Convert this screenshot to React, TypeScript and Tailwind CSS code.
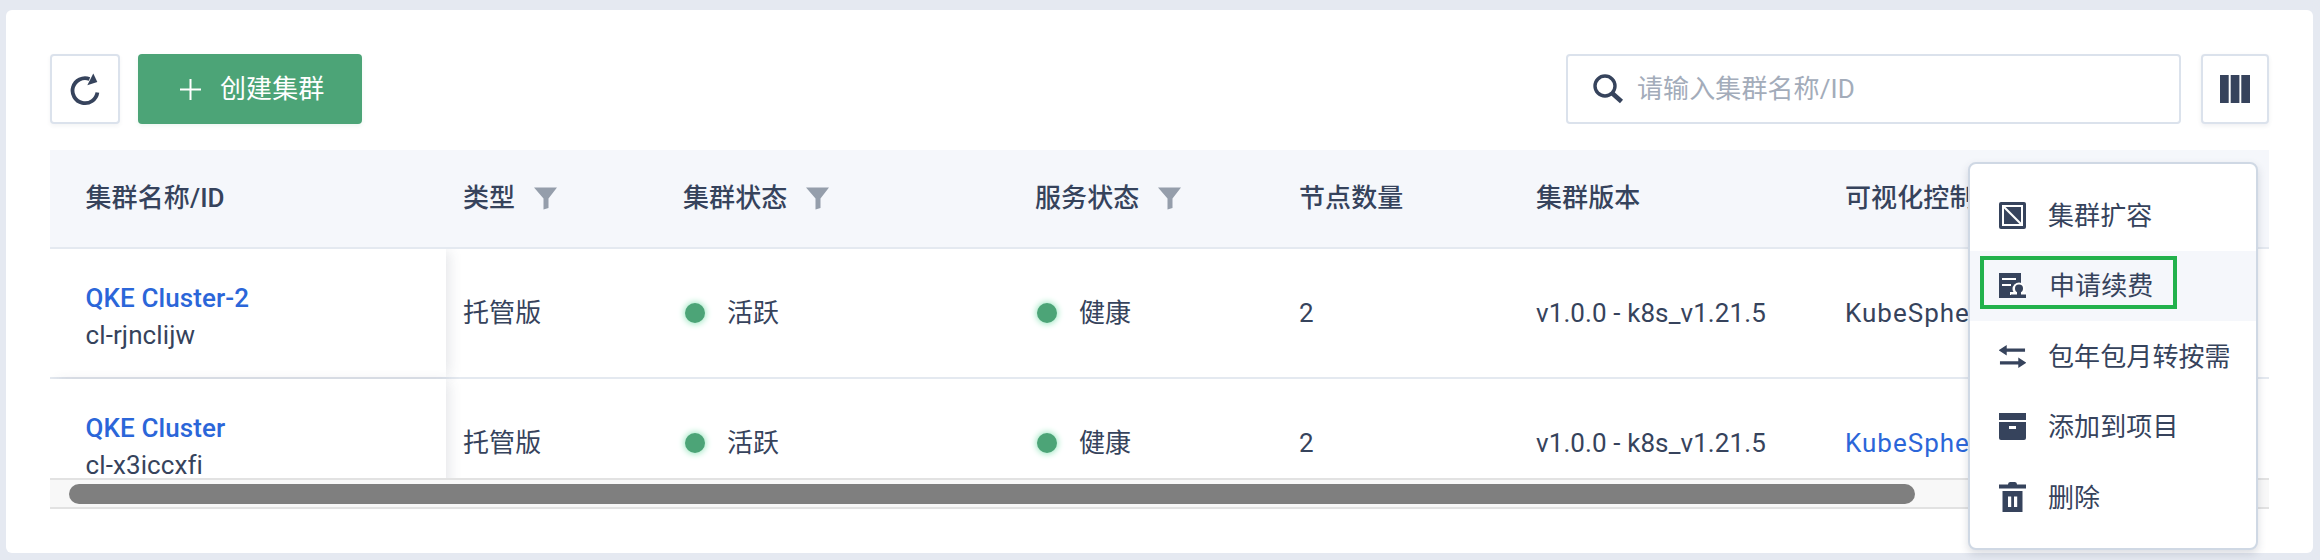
import React from "react";

const columns = [
  { title: "集群名称/ID" },
  { title: "类型", filter: true },
  { title: "集群状态", filter: true },
  { title: "服务状态", filter: true },
  { title: "节点数量" },
  { title: "集群版本" },
  { title: "可视化控制台" },
];

const rows = [
  { name: "QKE Cluster-2", id: "cl-rjnclijw", linked: false },
  { name: "QKE Cluster", id: "cl-x3iccxfi", linked: true },
];

const gridCols = "grid grid-cols-[396px_237px_352px_264px_237px_309px_1fr]";

function FunnelIcon() {
  return (
    <svg width="23" height="23" viewBox="0 0 23 23" className="ml-[19px] shrink-0 fill-[#959eab]">
      <path d="M0 0.5H23L14.5 11.5V21L9.5 22.5V11.5Z" />
    </svg>
  );
}

function StatusDot({ label }: { label: string }) {
  return (
    <div className="flex items-center">
      <span className="ml-[2px] h-5 w-5 rounded-full bg-[#4ca477] shadow-[0_0_6px_1px_#9be6c0]" />
      <span className="ml-[22px]">{label}</span>
    </div>
  );
}

function Toolbar() {
  return (
    <div className="flex h-[70px] items-stretch">
      <button className="flex w-[70px] items-center justify-center rounded-[4px] border-2 border-[#dbe2ec] bg-white shadow-[0_2px_4px_rgba(54,67,92,0.06)]">
        <svg width="30" height="33" viewBox="0 0 30 33" fill="none">
          <path d="M27.4 19.5A12.5 12.5 0 1 1 19.5 6" stroke="#36435c" strokeWidth="3.8" />
          <path d="M23.3 0.6L27.3 9L17.3 12.3Z" fill="#36435c" />
        </svg>
      </button>
      <button className="ml-[18px] flex w-[224px] items-center rounded-[4px] bg-[#4ca477] pl-[42px] text-white shadow-[0_2px_4px_rgba(76,164,119,0.1)]">
        <svg width="21" height="21" viewBox="0 0 21 21" stroke="#fff" strokeWidth="2">
          <path d="M10.5 0V21M0 10.5H21" />
        </svg>
        <span className="ml-[19px]">创建集群</span>
      </button>
      <div className="ml-auto flex w-[615px] items-center rounded-[4px] border-2 border-[#dbe2ec] bg-white pl-[25px]">
        <svg width="31" height="30" viewBox="0 0 31 30" fill="none" stroke="#36435c">
          <circle cx="12" cy="12" r="10" strokeWidth="3.4" />
          <path d="M19.5 19.5L28.5 27.5" strokeWidth="4.6" />
        </svg>
        <span className="ml-[13px] text-[#a3acba]">请输入集群名称/ID</span>
      </div>
      <button className="ml-5 flex w-[68px] items-center justify-center rounded-[4px] border-2 border-[#dbe2ec] bg-white shadow-[0_2px_4px_rgba(54,67,92,0.08)]">
        <svg width="30" height="28" viewBox="0 0 30 28" fill="#36435c">
          <rect x="0" y="0" width="8.7" height="28" />
          <rect x="10.7" y="0" width="8.7" height="28" />
          <rect x="21.3" y="0" width="8.7" height="28" />
        </svg>
      </button>
    </div>
  );
}

function ClusterTable() {
  return (
    <div className="mt-[26px] overflow-hidden">
      <div className={`${gridCols} h-[99px] items-center border-b-2 border-[#e4e9f0] bg-[#f5f7fb] font-medium`}>
        {columns.map((col, i) => (
          <div
            key={col.title}
            className={`flex items-center whitespace-nowrap ${i === 0 ? "pl-[35.5px]" : ""} ${i === 1 ? "pl-[17px]" : ""}`}
          >
            {col.title}
            {col.filter && <FunnelIcon />}
          </div>
        ))}
      </div>
      <div className="h-[229px] overflow-hidden">
        {rows.map((row) => (
          <div key={row.id} className={`${gridCols} h-[130px] items-stretch border-b-2 border-[#e4e9f0]`}>
            <div className="relative z-10 flex flex-col justify-center bg-white pl-[35.5px] pt-2 leading-[37px] shadow-[6px_0_12px_-2px_rgba(54,67,92,0.12)]">
              <span className="font-medium text-[#2b66d9]">{row.name}</span>
              <span>{row.id}</span>
            </div>
            <div className="flex items-center pl-[17px]">托管版</div>
            <div className="flex items-center">
              <StatusDot label="活跃" />
            </div>
            <div className="flex items-center">
              <StatusDot label="健康" />
            </div>
            <div className="flex items-center">2</div>
            <div className="flex items-center whitespace-nowrap">v1.0.0 - k8s_v1.21.5</div>
            <div className={`flex items-center whitespace-nowrap tracking-[1px] ${row.linked ? "text-[#2b66d9]" : ""}`}>KubeSphere</div>
          </div>
        ))}
      </div>
      <div className="flex h-[31px] items-center border-y-2 border-[#e2e2e2] bg-[#f8f8f8] pl-[19px]">
        <div className="h-5 w-[1846px] rounded-full bg-[#7f7f7f]" />
      </div>
    </div>
  );
}

function ActionMenu() {
  return (
    <div className="absolute right-[55px] top-[152px] z-20 w-[290px] rounded-[8px] border-2 border-[#cfd8e4] bg-white pb-[15px] pt-4 shadow-[0_4px_8px_rgba(54,67,92,0.18)]">
      <MenuItem label="集群扩容">
        <svg width="27" height="27" viewBox="0 0 27 27">
          <rect width="27" height="27" rx="2" fill="#36435c" />
          <rect x="3" y="3" width="21" height="21" fill="#fff" />
          <rect x="5" y="5" width="17" height="17" fill="#36435c" />
          <path d="M4 4L23 23" stroke="#fff" strokeWidth="2.2" />
        </svg>
      </MenuItem>
      <MenuItem label="申请续费" active>
        <svg width="27" height="27" viewBox="0 0 27 27">
          <rect x="0" y="1" width="22" height="25" fill="#36435c" />
          <rect x="3" y="6" width="14" height="2" fill="#fff" />
          <rect x="3" y="12" width="9" height="2" fill="#fff" />
          <circle cx="20" cy="17" r="6.5" fill="#fff" />
          <rect x="11" y="20" width="16" height="3" fill="#fff" />
          <circle cx="20" cy="16.5" r="4" fill="#36435c" />
          <rect x="18" y="18" width="4" height="5" fill="#36435c" />
          <rect x="12" y="22.5" width="15" height="3.5" fill="#36435c" />
        </svg>
      </MenuItem>
      <MenuItem label="包年包月转按需">
        <svg width="28" height="27" viewBox="0 0 28 27" fill="#36435c">
          <path d="M-0.5 7L8 1.5V5.3H27V8.7H8V12.5Z" />
          <path d="M28.5 20L20 14.5V18.3H1V21.7H20V25.5Z" />
        </svg>
      </MenuItem>
      <MenuItem label="添加到项目">
        <svg width="27" height="27" viewBox="0 0 27 27" fill="#36435c">
          <rect width="27" height="7" />
          <path d="M0 9H27V25A2 2 0 0 1 25 27H2A2 2 0 0 1 0 25Z" />
          <rect x="10" y="13" width="7" height="3" fill="#fff" />
        </svg>
      </MenuItem>
      <MenuItem label="删除">
        <svg width="27" height="30" viewBox="0 0 27 30" fill="#36435c">
          <path d="M9 2.5Q9 0 11 0H16Q18 0 18 2.5H27V6.5H0V2.5Z" />
          <path d="M3.5 9H23.5V30H3.5Z" />
          <rect x="9" y="14.5" width="3.2" height="10.5" fill="#fff" />
          <rect x="15" y="14.5" width="3.2" height="10.5" fill="#fff" />
        </svg>
      </MenuItem>
    </div>
  );
}

function MenuItem({ label, active, children }: { label: string; active?: boolean; children: React.ReactNode }) {
  return (
    <div className={`relative flex h-[70.5px] items-center pl-[29px] ${active ? "bg-[#f5f7fb]" : ""}`}>
      <div className="flex w-[27px] justify-center">{children}</div>
      <span className={`mt-[2px] ${active ? "ml-[23px]" : "ml-[22px]"}`}>{label}</span>
      {active && <div className="absolute left-[10px] top-[5px] h-[53px] w-[197px] border-4 border-[#22b14c]" />}
    </div>
  );
}

export default function App() {
  return (
    <div className="h-[560px] bg-[#e5e9f1] pb-[7px] pl-[6px] pr-[7px] pt-[10px] font-['Roboto','Noto_Sans_CJK_SC',sans-serif] text-[26px] tracking-[0.1px] text-[#36435c]">
      <div className="relative h-full rounded-[6px] bg-white px-11 pt-11">
        <Toolbar />
        <ClusterTable />
        <ActionMenu />
      </div>
    </div>
  );
}
